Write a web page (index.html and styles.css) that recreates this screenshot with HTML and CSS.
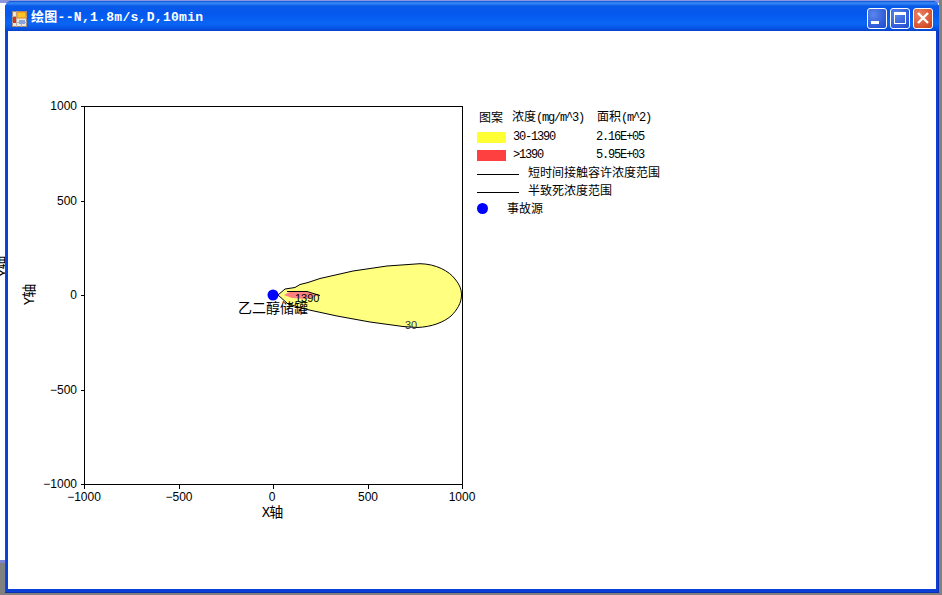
FILE: index.html
```html
<!DOCTYPE html>
<html lang="zh">
<head>
<meta charset="utf-8">
<title>绘图</title>
<link rel="stylesheet" href="styles.css">
</head>
<body>
<div class="desktop">
  <svg class="behind" width="5" height="30" viewBox="0 0 5 30"><text class="axis-title" transform="rotate(-90 8 15)" x="8" y="15">Y轴</text></svg>
  <div class="window">
    <header class="titlebar">
      <svg class="app-icon" width="15" height="16" viewBox="0 0 15 16">
        <rect x="0.5" y="0.5" width="14" height="15" fill="#e8e6e0" stroke="#a08878"/>
        <path d="M0 5.500h15M0 11.500h15M4.500 0v16M9.500 11v5" stroke="#b8b0b0" fill="none"/>
        <rect x="1" y="6" width="3" height="6" fill="#c83c1c"/>
        <rect x="5" y="1" width="9" height="6" fill="#f8c428" stroke="#e08828"/>
        <rect x="7" y="9" width="6" height="4" fill="#8aa4dc"/>
      </svg>
      <span class="title-text">绘图--N,1.8m/s,D,10min</span>
      <div class="caption-buttons">
        <button class="cap cap-blue" aria-label="最小化"><svg width="20" height="20" viewBox="0 0 20 20"><rect x="4" y="13" width="8" height="3" fill="#fff"/></svg></button>
        <button class="cap cap-blue" aria-label="最大化"><svg width="20" height="20" viewBox="0 0 20 20"><path d="M4 4h12v12H4z M5 7v8h10V7z" fill="#fff" fill-rule="evenodd"/></svg></button>
        <button class="cap cap-red" aria-label="关闭"><svg width="20" height="20" viewBox="0 0 20 20"><path d="M5 5l10 10M15 5L5 15" stroke="#fff" stroke-width="2.400"/></svg></button>
      </div>
    </header>
    <main class="client">
      <svg class="chart" width="480" height="558" viewBox="8 31 480 558">
        <path class="plume" d="M278 295 L285 289 L295 287.500 L300 284.500 L308 282.500 L320 278.500 L353 271 L387 266 L420 263.700 C436 264 449 271 455 279 C460 285 461.500 290 461.500 295 C461.500 303 457 310 451 316 C444 322 432 327 417 327.500 L403 326.500 L370 322 L337 316 L307 309.500 L288 304 Z"/>
        <path class="core" d="M284 295 L290 291.700 L307 291.700 L318 295.500 L307 299 L292 298 Z"/>
        <path class="thin" d="M287 291.500 L307 291.500 L320 295.500"/>
        <rect class="frame" x="84.500" y="106.500" width="378" height="378"/>
        <path class="thin" d="M81 106.500h4M81 201.500h4M81 295.500h4M81 390.500h4M81 484.500h4M84.500 485v4M179.500 485v4M273.500 485v4M368.500 485v4M462.500 485v4"/>
        <circle class="source" cx="273" cy="295" r="5.500"/>
        <g class="tick tick-y">
          <text x="77" y="110">1000</text>
          <text x="77" y="205">500</text>
          <text x="77" y="299">0</text>
          <text x="77" y="394">−500</text>
          <text x="77" y="488">−1000</text>
        </g>
        <g class="tick tick-x">
          <text x="84" y="501">−1000</text>
          <text x="179" y="501">−500</text>
          <text x="272" y="501">0</text>
          <text x="368" y="501">500</text>
          <text x="462" y="501">1000</text>
        </g>
        <text class="axis-title" x="272" y="517">X轴</text>
        <text class="axis-title" transform="rotate(-90 34 295)" x="34" y="295">Y轴</text>
        <text class="site" x="238" y="313">乙二醇储罐</text>
        <text class="contour" x="295" y="302">1390</text>
        <text class="contour contour-low" x="405" y="329">30</text>
      </svg>
      <section class="legend">
        <div class="legend-row legend-head"><span class="c1">图案</span><span class="c2">浓度<span class="lat">(mg/m^3)</span></span><span>面积<span class="lat">(m^2)</span></span></div>
        <div class="legend-row swatch-row"><i class="swatch swatch-yellow"></i><span class="c3 lat">30-1390</span><span class="lat">2.16E+05</span></div>
        <div class="legend-row swatch-row"><i class="swatch swatch-red"></i><span class="c3 lat">&gt;1390</span><span class="lat">5.95E+03</span></div>
        <div class="legend-row"><i class="rule"></i><span>短时间接触容许浓度范围</span></div>
        <div class="legend-row"><i class="rule"></i><span>半致死浓度范围</span></div>
        <div class="legend-row"><i class="dot"></i><span>事故源</span></div>
      </section>
    </main>
  </div>
</div>
</body>
</html>
```
FILE: styles.css
```css
* { box-sizing: border-box; }
html, body { margin: 0; height: 100%; background: #fff; overflow: hidden; }
.desktop {
  width: 942px; height: 595px; padding: 1px 3px 2px 5px; position: relative;
  background:
    linear-gradient(90deg, transparent 939px, #808080 939px),
    linear-gradient(#8c96dc 0, #8c96dc 3px, #fff 3px, #fff 560px, #7c86d4 560px, #7c86d4 563px, #808080 563px);
}
.behind { position: absolute; left: 0; top: 252px; }
.window {
  height: 592px; display: flex; flex-direction: column;
  background: #0a3fd8; border-radius: 7px 7px 0 0;
  padding: 0 3px 4px 3px;
  box-shadow: inset -1px 0 #0a2fb0, inset 0 -1px #0a2fb0, inset 1px 0 #0c4ce4;
}
.titlebar {
  height: 30px; margin: 0 -3px; padding: 0 6px 0 7px; flex: none;
  display: flex; align-items: center; gap: 3px;
  border-radius: 7px 7px 0 0;
  background: linear-gradient(#0a50d8 0, #3a8cf8 2px, #0a5ae8 5px, #0458ee 13px, #0a66f4 23px, #0550e0 28px, #0a3fc8 30px);
}
.app-icon { flex: none; margin-top: 5px; }
.title-text {
  margin-left: 1px; margin-top: 3px; color: #fff;
  font: bold 13px/16px "Liberation Mono", "Noto Sans CJK SC", monospace;
  letter-spacing: .300px; white-space: nowrap; flex: 1;
}
.caption-buttons { display: flex; gap: 3px; margin-top: 4px; }
.cap {
  width: 20px; height: 21px; padding: 0; border: 1px solid #fff; border-radius: 3px; display: block;
}
.cap svg { display: block; margin: -1px; }
.cap-blue { background: radial-gradient(circle at 30% 30%, #5a86ea, #2a56d8 75%, #1a46c8); }
.cap-red { background: radial-gradient(circle at 30% 30%, #e88468, #d8502c 70%, #c03a18); }
.client { flex: 1; display: flex; background: #fff; min-height: 0; }
.chart { display: block; flex: none; overflow: hidden; }
.plume { fill: #ffff80; stroke: #000; stroke-width: 1; }
.core { fill: #ff8080; }
.thin { fill: none; stroke: #000; stroke-width: 1; }
.frame { fill: none; stroke: #000; stroke-width: 1; }
.source { fill: #0000ff; }
.tick text { font: 12px "Liberation Sans", sans-serif; fill: #000; }
.tick-y text { text-anchor: end; }
.tick-x text { text-anchor: middle; }
.axis-title { font: 14px "Liberation Mono", "Noto Sans CJK SC", sans-serif; text-anchor: middle; fill: #000; letter-spacing: -1px; }
.site { font: 14px "Noto Sans CJK SC", sans-serif; fill: #000; }
.contour { font: 11px "Liberation Sans", sans-serif; fill: #000; }
.contour-low { fill: #334; }
.legend {
  margin: 77px 0 0 -11px; width: 220px; display: flex; flex-direction: column;
  font: 12px/18px "Noto Sans CJK SC", sans-serif; color: #000;
}
.legend-row { display: flex; align-items: center; height: 18px; white-space: nowrap; }
.legend-head { margin-bottom: 1px; }
.swatch-row { padding-top: 2px; }
.lat { font: 12px/18px "Liberation Mono", monospace; letter-spacing: -1.200px; }
.c1 { width: 35px; padding-left: 2px; }
.c2 { width: 85px; }
.c3 { width: 83px; }
.swatch { display: block; width: 29px; height: 11px; margin-right: 7px; flex: none; }
.swatch-yellow { background: #ffff33; }
.swatch-red { background: #ff4040; }
.rule { display: block; width: 42px; height: 1px; background: #000; margin: 4px 9px 0 0; flex: none; }
.dot { display: block; width: 11px; height: 11px; border-radius: 50%; background: #0000ff; margin-right: 19px; flex: none; }
```
